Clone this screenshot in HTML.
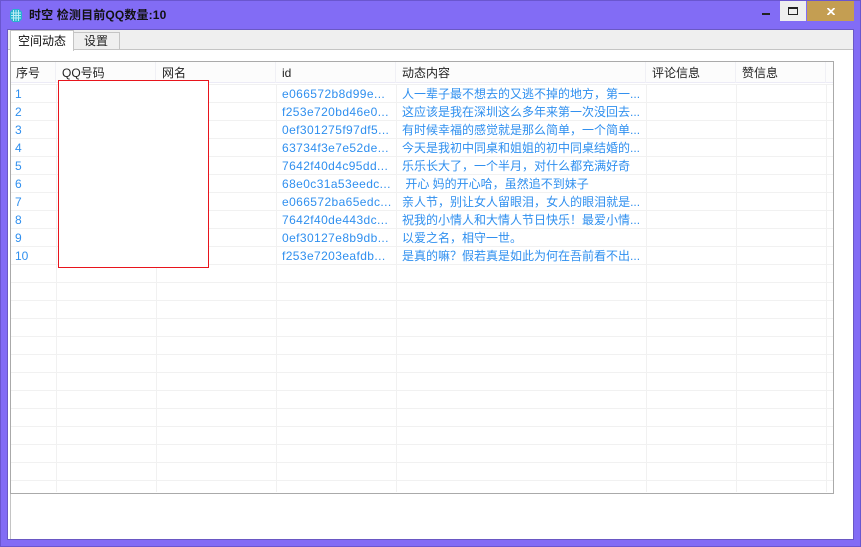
<!DOCTYPE html>
<html lang="zh">
<head>
<meta charset="utf-8">
<style>
html,body{margin:0;padding:0;background:#826cf5;}
body{position:relative;width:861px;height:547px;overflow:hidden;font-family:"Liberation Sans","Noto Sans CJK SC",sans-serif;font-size:12px;color:#111;}
div{position:absolute;box-sizing:border-box;}
.t{white-space:pre;line-height:18px;height:18px;}
.b{color:#2f8fef;}
.p{font-family:"Noto Sans CJK TC",sans-serif;}
.h{color:#222;line-height:20px;height:20px;white-space:pre;top:63px;}
.hl{background:#f0f0f5;width:1px;top:62px;height:21px;}
.v{background:#f1f1f1;width:1px;top:84px;height:408px;}
.r{background:#f1f1f1;left:11px;width:822px;height:1px;}
</style>
</head>
<body>
<div style="left:0;top:0;width:861px;height:547px;border:1px solid #6a56cf;"></div>

<svg style="position:absolute;left:9px;top:8px" width="14" height="15" viewBox="0 0 14 15">
<path d="M4 1H10L13 4V11L10 14H4L1 11V4Z" fill="#27b3cf"/>
<path d="M4.500 2V13M7 2V13M9.500 2V13M2 5H12M2 7.500H12M2 10H12" stroke="#bdeef5" stroke-width="1"/>
</svg>
<div class="t" style="left:29px;top:6px;font-weight:bold;color:#111;letter-spacing:.15px;">时空 检测目前QQ数量:10</div>

<div style="left:762px;top:13px;width:8px;height:2px;background:#222;"></div>
<div style="left:780px;top:1px;width:26px;height:20px;background:#eeeeee;"></div>
<div style="left:788px;top:7px;width:10px;height:8px;border:1px solid #222;border-top-width:2px;"></div>
<div style="left:807px;top:1px;width:47px;height:20px;background:#c49e52;"></div>
<svg style="position:absolute;left:827px;top:8px" width="8" height="7" viewBox="0 0 8 7">
<path d="M.5 0L7.500 7M7.500 0L.5 7" stroke="#fff" stroke-width="1.800"/>
</svg>

<div style="left:7px;top:29px;width:847px;height:511px;background:#fff;border:1px solid #6a58c4;"></div>
<div style="left:8px;top:30px;width:845px;height:19px;background:#efefef;"></div>
<div style="left:8px;top:49px;width:845px;height:1px;background:#c4c4c4;"></div>
<div style="left:10px;top:50px;width:1px;height:489px;background:#c4c4c4;"></div>

<div style="left:10px;top:30px;width:64px;height:21px;background:#fff;border:1px solid #c4c4c4;border-bottom:0;"></div>
<div class="t" style="left:18px;top:32px;color:#111;">空间动态</div>
<div style="left:74px;top:32px;width:46px;height:17px;background:#efefef;border:1px solid #c4c4c4;border-left:0;border-bottom:0;"></div>
<div class="t" style="left:84px;top:32px;color:#222;">设置</div>

<div style="left:10px;top:61px;width:824px;height:433px;background:#fff;border:1px solid #aaaaaa;"></div>
<div style="left:11px;top:62px;width:822px;height:21px;background:#fcfcfc;"></div>
<div style="left:11px;top:82px;width:822px;height:1px;background:#ecebf6;"></div>

<div class="hl" style="left:55px"></div>
<div class="hl" style="left:155px"></div>
<div class="hl" style="left:275px"></div>
<div class="hl" style="left:395px"></div>
<div class="hl" style="left:645px"></div>
<div class="hl" style="left:735px"></div>
<div class="hl" style="left:825px"></div>

<div class="v" style="left:56px"></div>
<div class="v" style="left:156px"></div>
<div class="v" style="left:276px"></div>
<div class="v" style="left:396px"></div>
<div class="v" style="left:646px"></div>
<div class="v" style="left:736px"></div>
<div class="v" style="left:826px"></div>

<div class="r" style="top:84px"></div>
<div class="r" style="top:102px"></div>
<div class="r" style="top:120px"></div>
<div class="r" style="top:138px"></div>
<div class="r" style="top:156px"></div>
<div class="r" style="top:174px"></div>
<div class="r" style="top:192px"></div>
<div class="r" style="top:210px"></div>
<div class="r" style="top:228px"></div>
<div class="r" style="top:246px"></div>
<div class="r" style="top:264px"></div>
<div class="r" style="top:282px"></div>
<div class="r" style="top:300px"></div>
<div class="r" style="top:318px"></div>
<div class="r" style="top:336px"></div>
<div class="r" style="top:354px"></div>
<div class="r" style="top:372px"></div>
<div class="r" style="top:390px"></div>
<div class="r" style="top:408px"></div>
<div class="r" style="top:426px"></div>
<div class="r" style="top:444px"></div>
<div class="r" style="top:462px"></div>
<div class="r" style="top:480px"></div>

<div class="h" style="left:16px">序号</div>
<div class="h" style="left:62px">QQ号码</div>
<div class="h" style="left:162px">网名</div>
<div class="h" style="left:282px">id</div>
<div class="h" style="left:402px">动态内容</div>
<div class="h" style="left:652px">评论信息</div>
<div class="h" style="left:742px">赞信息</div>

<div class="t b" style="left:15px;top:85px">1</div>
<div class="t b" style="left:15px;top:103px">2</div>
<div class="t b" style="left:15px;top:121px">3</div>
<div class="t b" style="left:15px;top:139px">4</div>
<div class="t b" style="left:15px;top:157px">5</div>
<div class="t b" style="left:15px;top:175px">6</div>
<div class="t b" style="left:15px;top:193px">7</div>
<div class="t b" style="left:15px;top:211px">8</div>
<div class="t b" style="left:15px;top:229px">9</div>
<div class="t b" style="left:15px;top:247px">10</div>

<div class="t b" style="left:282px;top:85px;letter-spacing:.4px">e066572b8d99e...</div>
<div class="t b" style="left:282px;top:103px;letter-spacing:.4px">f253e720bd46e0...</div>
<div class="t b" style="left:282px;top:121px;letter-spacing:.4px">0ef301275f97df5...</div>
<div class="t b" style="left:282px;top:139px;letter-spacing:.4px">63734f3e7e52de...</div>
<div class="t b" style="left:282px;top:157px;letter-spacing:.4px">7642f40d4c95dd...</div>
<div class="t b" style="left:282px;top:175px;letter-spacing:.4px">68e0c31a53eedc...</div>
<div class="t b" style="left:282px;top:193px;letter-spacing:.4px">e066572ba65edc...</div>
<div class="t b" style="left:282px;top:211px;letter-spacing:.4px">7642f40de443dc...</div>
<div class="t b" style="left:282px;top:229px;letter-spacing:.4px">0ef30127e8b9db...</div>
<div class="t b" style="left:282px;top:247px;letter-spacing:.4px">f253e7203eafdb...</div>

<div class="t b" style="left:402px;top:85px">人一辈子最不想去的又逃不掉的地方<span class="p">，</span>第一...</div>
<div class="t b" style="left:402px;top:103px">这应该是我在深圳这么多年来第一次没回去...</div>
<div class="t b" style="left:402px;top:121px">有时候幸福的感觉就是那么简单<span class="p">，</span>一个简单...</div>
<div class="t b" style="left:402px;top:139px">今天是我初中同桌和姐姐的初中同桌结婚的...</div>
<div class="t b" style="left:402px;top:157px">乐乐长大了<span class="p">，</span>一个半月<span class="p">，</span>对什么都充满好奇</div>
<div class="t b" style="left:402px;top:175px"> 开心 妈的开心哈<span class="p">，</span>虽然追不到妹子</div>
<div class="t b" style="left:402px;top:193px">亲人节<span class="p">，</span>别让女人留眼泪<span class="p">，</span>女人的眼泪就是...</div>
<div class="t b" style="left:402px;top:211px">祝我的小情人和大情人节日快乐<span class="p">！</span>最爱小情...</div>
<div class="t b" style="left:402px;top:229px">以爱之名<span class="p">，</span>相守一世<span class="p">。</span></div>
<div class="t b" style="left:402px;top:247px">是真的嘛<span class="p">？</span>假若真是如此为何在吾前看不出...</div>

<div style="left:58px;top:80px;width:151px;height:188px;background:#fff;border:1px solid #e8141c;"></div>
</body>
</html>
